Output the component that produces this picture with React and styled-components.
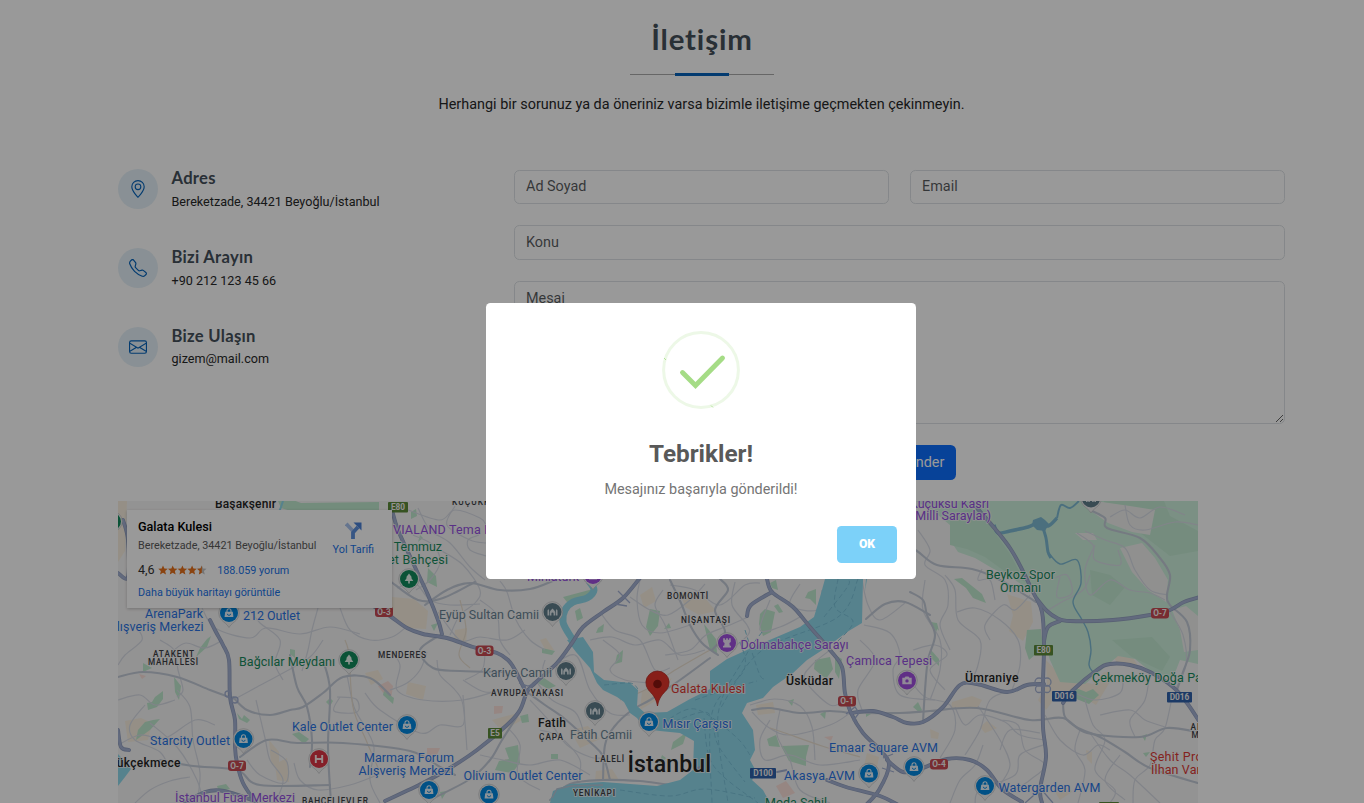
import React from "react";
import styled, { createGlobalStyle } from "styled-components";
import { BsGeoAlt, BsTelephone, BsEnvelope } from "react-icons/bs";

const GlobalStyle = createGlobalStyle`
  *, *::before, *::after { box-sizing: border-box; }
  html, body { margin: 0; height: 100%; overflow: hidden; background: #fff; }
  body {
    font-family: Roboto, "Liberation Sans", sans-serif;
    font-size: 14.4px;
    line-height: 1.5;
    color: #272829;
  }
  h2, h3, h4, p { margin: 0; }
`;

const Page = styled.main`
  height: 803px;
  overflow: hidden;
  padding: 18px 79px 0 118px;
`;

const SectionTitle = styled.header`
  display: flex;
  flex-direction: column;
  align-items: center;
  height: 152px;
`;

const Title = styled.h2`
  font-family: Lato, "Open Sans", sans-serif;
  font-size: 29.4px;
  line-height: 42px;
  font-weight: 700;
  color: #45505b;
  letter-spacing: 0.85px;
  margin-right: -0.85px;
`;

const Divider = styled.div`
  display: flex;
  align-items: center;
  justify-content: center;
  width: 144px;
  height: 3px;
  margin-top: 13px;
  background: linear-gradient(#aaa, #aaa) center / 100% 1px no-repeat;
  &::after {
    content: "";
    width: 54px;
    height: 3px;
    background: #0563bb;
  }
`;

const Lead = styled.p`
  margin-top: 18px;
  line-height: 22px;
  letter-spacing: 0.015px;
`;

const Columns = styled.div`
  display: grid;
  grid-template-columns: 396px 771px;
  height: 331px;
`;

const InfoList = styled.div`
  display: flex;
  flex-direction: column;
  gap: 38.7px;
  margin-top: -0.6px;
`;

const InfoItem = styled.div`
  display: flex;
  gap: 13.5px;
  height: 40px;
`;

const IconCircle = styled.div`
  display: grid;
  place-items: center;
  width: 40px;
  height: 40px;
  border-radius: 50%;
  background: #e5f1f8;
  color: #0563bb;
  font-size: 18px;
  svg { display: block; }
`;

const InfoTitle = styled.h4`
  font-family: Lato, "Open Sans", sans-serif;
  font-size: 16.6px;
  line-height: 19px;
  font-weight: 700;
  color: #45505b;
  letter-spacing: 0.3px;
`;

const InfoText = styled.p`
  margin-top: 3.5px;
  font-size: 12.6px;
  line-height: 20px;
  white-space: nowrap;
`;

const Form = styled.form`
  display: flex;
  flex-direction: column;
  gap: 21px;
`;

const FieldRow = styled.div`
  display: grid;
  grid-template-columns: 1fr 1fr;
  gap: 21px;
`;

const fieldLook = `
  width: 100%;
  padding: 5px 11px 6px;
  border: 1px solid #dee2e6;
  border-radius: 5.4px;
  background: #fff;
  color: #212529;
  font: 400 14.4px/21.6px Roboto, sans-serif;
  &::placeholder { color: rgba(33, 37, 41, 0.75); opacity: 1; }
`;

const Input = styled.input`
  ${fieldLook}
  height: ${(p) => p.$height || 34}px;
`;

const Message = styled.textarea`
  ${fieldLook}
  display: block;
  height: 143px;
  padding-top: 6px;
  resize: vertical;
`;

const SendButton = styled.button`
  align-self: center;
  width: 113px;
  height: 35px;
  padding: 0 3px 0 0;
  border: 0;
  border-radius: 5.4px;
  background: #0d6efd;
  color: #fff;
  font: 400 14.4px/35px Roboto, sans-serif;
  white-space: nowrap;
`;

const MapFrame = styled.section`
  position: relative;
  width: 1080px;
  height: 302px;
  overflow: hidden;
  background: #f6f5f5;
`;

const MapCanvas = styled.svg`
  display: block;
  font-family: Roboto, sans-serif;
`;

const PlaceCard = styled.aside`
  position: absolute;
  left: 9px;
  top: 9px;
  width: 265px;
  height: 98px;
  padding: 8px 17px 0 11px;
  display: flex;
  justify-content: space-between;
  background: #fff;
  box-shadow: 0 1px 3px rgba(0, 0, 0, 0.22);
  white-space: nowrap;
`;

const PlaceName = styled.h3`
  font-size: 12.6px;
  line-height: 18px;
  font-weight: 500;
  color: #000;
`;

const PlaceAddress = styled.p`
  margin-top: 1px;
  font-size: 10.8px;
  line-height: 18px;
  color: #5b5b5b;
`;

const Rating = styled.div`
  display: flex;
  align-items: center;
  margin-top: 6px;
  height: 19px;
  font-size: 12.6px;
  color: #333;
  svg { margin: 0 10.5px 1px 3px; }
`;

const Link = styled.a`
  font-size: 10.8px;
  line-height: 18px;
  color: #1a73e8;
`;

const MoreLink = styled(Link)`
  display: block;
  margin-top: 4px;
`;

const Directions = styled.div`
  display: flex;
  flex-direction: column;
  align-items: center;
  padding-top: 4px;
  margin-right: 1px;
  gap: 2px;
`;

const Overlay = styled.div`
  position: fixed;
  inset: 0;
  display: flex;
  align-items: flex-start;
  justify-content: center;
  padding: 303px 0 0 38px;
  background: rgba(0, 0, 0, 0.4);
`;

const Modal = styled.div`
  display: flex;
  flex-direction: column;
  align-items: center;
  width: 430px;
  height: 276px;
  border-radius: 4.5px;
  background: #fff;
`;

const SuccessMark = styled.svg`
  display: block;
  margin-top: 28px;
`;

const ModalTitle = styled.h2`
  margin-top: 27px;
  font-size: 24.3px;
  line-height: 36px;
  font-weight: 700;
  color: #595959;
`;

const ModalText = styled.p`
  margin-top: 7px;
  font-size: 14.4px;
  line-height: 22px;
  color: #757575;
`;

const OkButton = styled.button`
  align-self: flex-end;
  margin: 25px 19px 0 0;
  width: 60px;
  height: 37px;
  padding: 0 0 1px;
  border: 0;
  border-radius: 4.5px;
  background: #7cd1f9;
  color: #fff;
  font: 900 12.2px/35px Roboto, sans-serif;
`;

const curve = (pts) => {
  let d = `M${pts[0][0]} ${pts[0][1]}`;
  for (let i = 0; i < pts.length - 1; i++) {
    const a = pts[i - 1] || pts[i];
    const b = pts[i];
    const c = pts[i + 1];
    const e = pts[i + 2] || c;
    d += `C${b[0] + (c[0] - a[0]) / 6} ${b[1] + (c[1] - a[1]) / 6} ${c[0] - (e[0] - b[0]) / 6} ${c[1] - (e[1] - b[1]) / 6} ${c[0]} ${c[1]}`;
  }
  return d;
};

const highways = [
  [[210, 620], [216, 632], [223, 645], [229, 660], [230, 697], [235, 720], [235, 747], [237, 763], [243, 783], [256, 803]],
  [[360, 598], [375, 607], [390, 616], [407, 628], [423, 634], [447, 638], [473, 647], [497, 653], [508, 660], [515, 670], [524, 688]],
  [[648, 570], [640, 578], [623, 598], [603, 612], [583, 627], [572, 643], [557, 663], [535, 683], [527, 692], [520, 710], [507, 725], [477, 750], [450, 768], [423, 783], [385, 801]],
  [[767, 579], [772, 592], [793, 607], [810, 627], [830, 650], [842, 667], [845, 693], [851, 713], [863, 733], [880, 750], [889, 765], [879, 790], [865, 806]],
  [[851, 713], [873, 711], [893, 717], [907, 723], [923, 722], [943, 707], [960, 685], [977, 684], [1007, 692], [1027, 685], [1044, 684]],
  [[772, 592], [751, 605], [747, 616]],
  [[887, 760], [903, 772], [920, 769], [947, 759], [970, 760], [987, 770], [1002, 789], [1022, 802]],
  [[827, 780], [846, 787], [880, 796], [900, 806]],
  [[977, 508], [1010, 548], [1033, 592], [1042, 612], [1044, 645], [1043, 683], [1043, 727], [1046, 757], [1040, 790], [1043, 806]],
  [[1037, 599], [1047, 611], [1057, 618], [1070, 621], [1113, 620], [1150, 615], [1170, 610], [1184, 602], [1200, 597]],
  [[1044, 641], [1048, 627], [1060, 621]],
  [[1063, 703], [1072, 691], [1097, 670], [1110, 664], [1130, 665], [1150, 672], [1173, 687], [1187, 703], [1199, 721]],
  [[392, 510], [398, 530], [414, 565], [428, 595], [438, 620], [442, 634]],
  [[118, 573], [128, 577], [128, 540], [123, 520]],
  [[185, 803], [205, 792], [224, 791], [255, 801]],
  [[118, 730], [121, 747], [129, 750]],
];

const arterials = [
  [[1090, 510], [1105, 518], [1107, 528], [1140, 538], [1160, 558], [1170, 575], [1167, 595], [1170, 605], [1187, 622], [1190, 650], [1183, 672], [1177, 690]],
  [[777, 772], [743, 771], [710, 777], [680, 785], [640, 781], [603, 780], [570, 784], [550, 800]],
  [[850, 713], [900, 713], [930, 711], [977, 708], [1030, 720], [1063, 718], [1087, 733], [1140, 737], [1167, 728], [1198, 732]],
  [[1063, 700], [1065, 717], [1078, 728], [1100, 737], [1125, 752], [1150, 768], [1198, 783]],
  [[910, 592], [923, 600], [927, 615], [935, 635], [928, 660], [925, 690], [923, 722]],
  [[898, 540], [917, 551], [937, 565], [972, 569], [1000, 580], [1036, 602]],
  [[233, 697], [247, 710], [270, 715], [290, 710], [303, 707], [323, 693], [343, 677], [370, 678], [390, 695]],
  [[118, 677], [143, 672], [177, 677], [210, 690], [229, 697]],
  [[240, 757], [267, 740], [297, 743], [343, 743], [410, 751], [440, 767], [455, 775]],
  [[442, 634], [420, 650], [433, 668], [460, 671], [505, 672]],
  [[425, 605], [447, 590], [470, 583], [500, 590], [530, 589], [555, 580]],
  [[390, 581], [418, 600], [443, 598], [475, 582]],
  [[524, 690], [545, 705], [565, 719], [590, 742], [603, 756], [610, 780]],
  [[603, 780], [605, 745], [614, 727], [632, 710], [650, 700], [680, 680], [710, 658]],
  [[866, 619], [885, 604], [905, 602], [930, 615]],
  [[752, 710], [770, 708], [800, 713], [830, 711], [850, 713]],
  [[670, 580], [681, 603], [690, 625], [702, 643], [718, 655]],
  [[720, 579], [728, 590], [715, 610], [725, 632], [712, 650]],
  [[290, 655], [297, 687], [307, 707], [312, 740], [310, 767]],
  [[323, 660], [330, 690], [328, 747], [331, 803]],
  [[160, 760], [193, 766], [237, 770], [260, 785], [330, 785]],
  [[430, 800], [470, 779], [490, 760], [502, 740], [520, 712]],
];

const streets = [
  [[323, 640], [310, 657], [283, 673], [257, 687], [233, 700]],
  [[150, 723], [177, 747], [197, 780], [203, 803]],
  [[177, 690], [190, 707], [193, 740], [200, 773], [197, 803]],
  [[118, 745], [140, 735], [165, 738], [195, 720], [215, 725]],
  [[135, 803], [150, 790], [170, 781], [190, 777]],
  [[145, 705], [130, 725], [135, 740], [160, 752], [170, 770]],
  [[118, 700], [140, 695], [155, 705], [175, 700]],
  [[160, 640], [174, 650], [178, 670], [183, 690], [177, 697]],
  [[137, 628], [142, 640], [125, 655], [118, 665]],
  [[202, 608], [215, 628], [250, 638], [266, 628], [300, 634], [330, 627], [360, 634]],
  [[250, 610], [260, 623], [280, 640], [275, 663], [283, 680]],
  [[223, 640], [205, 648], [186, 643], [174, 650]],
  [[318, 608], [312, 630], [308, 650], [302, 671]],
  [[340, 608], [350, 630], [370, 640], [392, 637], [405, 628]],
  [[347, 675], [354, 707], [365, 727], [374, 748], [370, 780], [380, 803]],
  [[337, 697], [356, 699], [357, 712], [334, 711], [340, 697]],
  [[256, 700], [265, 738], [270, 760], [283, 780], [275, 803]],
  [[247, 760], [260, 775], [285, 783], [287, 762], [271, 750]],
  [[294, 763], [300, 780], [318, 790], [350, 785], [380, 774]],
  [[365, 693], [380, 710], [420, 733], [440, 725], [463, 725], [463, 695]],
  [[390, 650], [400, 665], [397, 690], [423, 700], [463, 700], [500, 690]],
  [[390, 690], [407, 683], [420, 670], [427, 652]],
  [[437, 660], [440, 675], [455, 690], [463, 705], [467, 750]],
  [[463, 680], [485, 692], [510, 690], [523, 690]],
  [[485, 653], [482, 670], [465, 680]],
  [[450, 635], [460, 615], [475, 603], [480, 590], [463, 565], [440, 550]],
  [[418, 508], [430, 530], [450, 543], [470, 567], [485, 580]],
  [[408, 510], [440, 520], [455, 510], [480, 518], [486, 525]],
  [[413, 535], [433, 545], [440, 562], [430, 580], [416, 590]],
  [[455, 506], [447, 525], [470, 540], [486, 543]],
  [[486, 556], [470, 550], [468, 540], [479, 535]],
  [[397, 588], [415, 583], [430, 600], [450, 605], [480, 604]],
  [[500, 581], [507, 592], [516, 620], [530, 640], [545, 650]],
  [[480, 600], [497, 615], [500, 640], [510, 655]],
  [[438, 612], [460, 640], [480, 637], [507, 640], [525, 630]],
  [[536, 681], [552, 700], [575, 712], [583, 730]],
  [[545, 660], [545, 670], [575, 655], [590, 690], [610, 713], [630, 715]],
  [[530, 700], [550, 722], [567, 745], [590, 757], [603, 758]],
  [[508, 728], [520, 745], [518, 775], [540, 790]],
  [[480, 755], [503, 760], [530, 765], [560, 760], [590, 775]],
  [[540, 730], [560, 737], [580, 760], [577, 782]],
  [[603, 640], [620, 655], [610, 670], [625, 680], [650, 683]],
  [[590, 640], [612, 637], [635, 645], [660, 640], [680, 655], [705, 650]],
  [[600, 612], [615, 630], [640, 640], [655, 670], [670, 668]],
  [[630, 597], [650, 610], [668, 615], [690, 600], [705, 584]],
  [[640, 580], [637, 600], [642, 625], [660, 633], [690, 625]],
  [[663, 590], [655, 605], [665, 625], [678, 660]],
  [[670, 585], [695, 590], [720, 605], [745, 585], [760, 583]],
  [[735, 582], [732, 605], [747, 625], [748, 635], [730, 650]],
  [[665, 655], [690, 650], [706, 635], [730, 625], [748, 617]],
  [[770, 600], [760, 630], [780, 627], [800, 617]],
  [[800, 584], [790, 605], [817, 610], [822, 590]],
  [[750, 705], [775, 699], [800, 706], [812, 727], [815, 760]],
  [[752, 712], [768, 727], [790, 735], [830, 725], [850, 713]],
  [[770, 720], [760, 740], [765, 760], [790, 755], [820, 765], [860, 760]],
  [[780, 710], [777, 735], [790, 760], [800, 790], [830, 803]],
  [[830, 650], [812, 665], [805, 680], [830, 705], [845, 700]],
  [[860, 640], [875, 660], [858, 690], [862, 710]],
  [[864, 625], [890, 633], [900, 655], [893, 670], [900, 695], [935, 700]],
  [[862, 580], [868, 605], [880, 620], [905, 603]],
  [[925, 580], [923, 610], [940, 640], [940, 670], [930, 700]],
  [[918, 530], [930, 550], [925, 565], [945, 580], [948, 605], [940, 625], [950, 650]],
  [[945, 575], [955, 590], [958, 620], [980, 640], [978, 665], [970, 684]],
  [[957, 612], [975, 608], [1000, 620], [1018, 640], [1020, 665], [1012, 690]],
  [[1030, 595], [1015, 610], [1003, 605], [985, 625], [990, 640]],
  [[995, 600], [990, 580], [978, 580], [982, 569]],
  [[1012, 690], [990, 700], [980, 730], [965, 755]],
  [[913, 650], [935, 645], [947, 655], [930, 670], [945, 690]],
  [[910, 680], [925, 697], [950, 705], [955, 730], [940, 758]],
  [[955, 707], [965, 725], [980, 715], [1005, 722], [1020, 735], [1045, 740]],
  [[978, 706], [1000, 740], [1010, 765], [1000, 785]],
  [[1000, 720], [1018, 725], [1025, 750], [1045, 765], [1030, 780], [1015, 790]],
  [[1043, 745], [1020, 755], [1015, 775], [980, 790], [975, 803]],
  [[1000, 750], [1010, 730], [1040, 733]],
  [[950, 803], [960, 780], [975, 765], [983, 745]],
  [[1073, 692], [1095, 700], [1120, 693], [1123, 677]],
  [[1080, 730], [1075, 750], [1085, 770], [1078, 803]],
  [[1045, 715], [1060, 740], [1083, 755], [1098, 745], [1110, 750]],
  [[1085, 700], [1093, 725], [1105, 740], [1095, 770], [1115, 790], [1110, 803]],
  [[1100, 715], [1130, 710], [1145, 720], [1165, 727]],
  [[1150, 670], [1145, 700], [1130, 720], [1135, 737]],
  [[1173, 692], [1165, 728], [1155, 740], [1150, 765], [1135, 780], [1133, 803]],
  [[1120, 755], [1105, 780], [1125, 800]],
  [[1090, 733], [1110, 760], [1130, 775], [1160, 803]],
  [[1085, 531], [1105, 540], [1125, 548], [1135, 570], [1150, 590], [1168, 595]],
  [[1077, 533], [1093, 545], [1095, 560], [1120, 565], [1118, 550]],
  [[1125, 505], [1130, 525], [1145, 530], [1175, 522], [1198, 525]],
  [[1110, 517], [1125, 510], [1140, 518], [1160, 507], [1185, 515]],
  [[1095, 545], [1085, 570], [1090, 595], [1110, 580], [1130, 590], [1150, 593], [1165, 600]],
  [[1060, 577], [1057, 597], [1072, 593], [1067, 575], [1055, 578]],
  [[1045, 612], [1060, 603], [1083, 590], [1090, 575]],
  [[1170, 612], [1183, 635], [1186, 665], [1175, 690]],
];

const ferries = [
  [[740, 642], [744, 670], [712, 713], [712, 803]],
  [[762, 632], [745, 657], [718, 715], [728, 803]],
  [[838, 579], [835, 607], [853, 622], [834, 645]],
  [[858, 579], [838, 617], [760, 652], [720, 709]],
  [[824, 617], [848, 586], [847, 579]],
  [[663, 723], [695, 709], [735, 736], [750, 755]],
  [[675, 721], [708, 713], [718, 745], [745, 782]],
  [[704, 718], [713, 765], [758, 803]],
  [[620, 790], [670, 796], [705, 789], [755, 798]],
  [[604, 685], [630, 683], [638, 689]],
  [[695, 700], [725, 690], [757, 681]],
  [[745, 630], [759, 673], [765, 679]],
];

const parks = [
  "M155 697l8-6 0 8-6 8-9 3-1-7 5-1z", "M145 722l8-2 7-1-10 11-14 10 2-10z", "M237 713l5 6 2-4 6 5-3 3-8-4z",
  "M200 648l7-9 4-3-4 11-11 10z", "M174 677l7 9-2 14-4-8z", "M292 734l7-2 10 7-5 5z", "M290 649l5 1 0 8-5-4z",
  "M143 663l9 5-9 4z", "M384 691l10 7-1 6-10-9z", "M330 698l3 3-3 5-4-4z", "M217 786l9-2 4 5-11 3z",
  "M428 568l8 8 1 11-10-5z", "M431 625l7-2-4 8z", "M411 512l5-3 1 7-6 3z", "M420 535l3 3-5 4z", "M542 648l13 3-3 4-10-2z",
  "M544 678l12 8-8 3-10-6z", "M520 716l8-2 1 8-7 1z", "M505 748l13-3 2 18-8 10-17-3 4-9 10-2z", "M440 792l7-1-5 8z",
  "M551 754h7v5h-7z", "M575 611l5-3 3 10-6 3z", "M598 628l6-4-1 8-7 1z", "M650 609l10 2-2 15-8 10-4-9z",
  "M563 597l30-8-2 8-20 10z", "M617 655l6-5-1 12-7 2z", "M673 742l14-10-4 12-12 6z", "M760 614l5-5 10 3-4 20-8 4-4-12z",
  "M704 624l12 15 1 15-7-4z", "M774 606l4-2 5 8-4 1z", "M808 592l8-3 0 16-6-6-5-1z", "M815 660l15-3 3 12-7 10-12-10z",
  "M781 746l28-1-3 12 0 9-17-5z", "M767 739l9-4 4 12-11-1z", "M788 701l6-2-2 7z", "M820 714l6-3-1 8z",
  "M922 710l-4-8-5 5 7 6z", "M954 579l8-1 20 16 4 9-13-5-7-10z", "M930 622l7 1 2 8-5-6z", "M1027 630l14-1 2 19-14 12-4-12z",
  "M1086 692l-10-4-2 10 15 6 10-9-6-6z", "M1142 736l5-2-2 7z", "M1143 753l7-1-4 5z", "M932 622l6 5-3 8z",
  "M931 650l8 9 0 7-8-8z", "M670 784l10-3-4 6z", "M662 755l-5 15 9-12z", "M866 711l5 3-5 3z", "M835 655l7 4-3 20-4-7z",
  "M669 623l-5 6 7-1z", "M770 583l6-3 2 10-6-2z", "M278 501l15-1 8 3 78-1 0 8-85 2-13-4z",
];

const sandAreas = [
  "M125 721l16-3 11 5-4 17-20 2z", "M118 501h9l-2 50-7 11z", "M269 740l10 12 0 20-8-9z", "M275 764l12-6 2 24-12-2z",
  "M392 597l22 2 14 12-2 18-18-1-16-13z", "M455 630l12-2-1 17-12-4z", "M365 673l13-3 5 9-12 6z", "M408 682l18 4-3 14-17-6z",
  "M492 720l22-6 8 6-20 11z", "M570 730l18-4 12 13-20 9z", "M596 771l16-2 7 11-24 1z", "M640 710l20-12 12-20-30 14z",
  "M680 592l24 5 12 14-17 4-14-8z", "M640 595l12-8 4 14-12 7z", "M756 705l17-3 2 11-17 2z", "M952 702l20-6 10 4-5 9-26-1z",
  "M1007 594l24 8 2 20-10 19-14-10 4-16z", "M1046 660l17 18 30 6 11-12 10 3-18 30-11-7-25-7-14 19-8-10 9-16z",
  "M980 727l7-6 10 7-12 5z", "M1086 750l6 2 0 12-5-5z", "M1113 655l20 3 6 9-22-4z", "M867 753l12 4-3 15-13-2z",
  "M930 729l9 4-1 6-7-1z", "M1060 800l12-8-3-5-14 5z", "M700 780l30-6 10 8-30 6z", "M540 640l6-2 8 12-8 1z",
];

const rosyAreas = [
  "M378 686l10-5 5 5-2 13-7-5z", "M139 674l7 2-4 3z", "M776 786l10-5 9 12-12 5z", "M494 706l9 0-1 7-8 1z",
  "M505 759l9 3-4 4-6-2z", "M824 737l9-1-2 5z", "M427 748l13 0-4 9-9-2z", "M1048 612l5 3-1 10-6-4z",
];

const label = {
  blue: "#2b74e4", green: "#178a5c", purple: "#9450e0", grey: "#688293", red: "#dc3a35", dark: "#242424", small: "#3d4045",
};

/* [text, x, baseline, width, colour, size, weight, anchor] */
const labels = [
  ["Başakşehir", 215, 508, 61, "dark", 12, 500],
  ["VIALAND Tema Park", 393, 534, 117, "purple", 12.5],
  ["15 Temmuz", 442, 551, 65, "green", 12.5, 400, "end"],
  ["Millet Bahçesi", 448, 563.5, 81, "green", 12.5, 400, "end"],
  ["ArenaPark", 145, 618, 58, "blue", 12.5],
  ["Alışveriş Merkezi", 203.5, 630.5, 95, "blue", 12.5, 400, "end"],
  ["212 Outlet", 243, 619.5, 57, "blue", 12.5],
  ["ATAKENT", 153, 656.5, 41, "small", 8.2, 500],
  ["MAHALLESİ", 148, 664.5, 50, "small", 8.2, 500],
  ["Bağcılar Meydanı", 239, 666, 96, "green", 12.5],
  ["MENDERES", 378, 657.5, 48, "small", 8.3, 500],
  ["Eyüp Sultan Camii", 439, 619, 100, "grey", 12.5],
  ["Miniatürk", 527, 581, 52, "purple", 12.5],
  ["KÜÇÜKKÖY", 452, 504.5, 50, "small", 8.3, 500],
  ["BOMONTİ", 667, 599, 41, "small", 8.3, 500],
  ["NİŞANTAŞI", 681, 623, 49, "small", 8.3, 500],
  ["Dolmabahçe Sarayı", 740.5, 649, 108, "purple", 12.5],
  ["Kariye Camii", 483, 677, 69, "grey", 12.5],
  ["AVRUPA YAKASI", 491, 696, 72, "small", 8.3, 500],
  ["Galata Kulesi", 671, 693, 74, "red", 12.5],
  ["Fatih", 538, 727, 28, "dark", 12, 500],
  ["ÇAPA", 539, 740, 24, "small", 8.3, 500],
  ["Fatih Camii", 570, 739, 62, "grey", 12.5],
  ["Mısır Çarşısı", 662.5, 728, 69, "blue", 12.5],
  ["LALELİ", 595, 761.5, 29, "small", 8.3, 500],
  ["İstanbul", 627.5, 771.5, 83.5, "dark", 23, 500],
  ["YENİKAPI", 573, 796, 42, "small", 8.3, 500],
  ["Olivium Outlet Center", 463.5, 779.5, 119, "blue", 12.5],
  ["Marmara Forum", 364, 762, 90, "blue", 12.5],
  ["Alışveriş Merkezi", 358.5, 775, 95, "blue", 12.5],
  ["Kale Outlet Center", 292, 731, 101, "blue", 12.5],
  ["Starcity Outlet", 150, 745, 80, "blue", 12.5],
  ["Küçükçekmece", 180.5, 767, 85, "dark", 12, 500, "end"],
  ["İstanbul Fuar Merkezi", 175, 802, 120, "purple", 12.5],
  ["BAHÇELİEVLER", 302, 803.5, 66, "small", 8.3, 500],
  ["Üsküdar", 786, 685, 47, "dark", 12.3, 500],
  ["Çamlıca Tepesi", 846, 665, 86, "purple", 12.5],
  ["Emaar Square AVM", 829, 751.5, 109, "blue", 12.5],
  ["Akasya AVM", 784, 779.5, 71, "blue", 12.5],
  ["Moda Sahil", 765, 807, 62, "green", 12.5],
  ["Küçüksu Kasrı", 989, 507.5, 79, "purple", 12.5, 400, "end"],
  ["(Milli Saraylar)", 991, 519.5, 80, "purple", 12.5, 400, "end"],
  ["Beykoz Spor", 986, 579, 69, "green", 12.5],
  ["Ormanı", 1000, 591.5, 41, "green", 12.5],
  ["Ümraniye", 965, 681.5, 53.5, "dark", 12.2, 500],
  ["Çekmeköy Doğa Parkı", 1092, 682, 124, "green", 12.5],
  ["ALEMDAĞ", 1190.5, 730, 44, "small", 8.3, 500],
  ["MAHALLESİ", 1191.5, 738, 50, "small", 8.3, 500],
  ["Şehit Prof. Dr.", 1150, 760.5, 80, "red", 12.5],
  ["İlhan Varank", 1151, 773.5, 70, "red", 12.5],
  ["Watergarden AVM", 998.5, 792, 102, "blue", 12.5],
];

const shieldColours = { r: "#c84a52", g: "#5d8a3a", b: "#2f62ab" };
/* [text, x, y, width, kind] */
const shields = [
  ["E80", 388, 502, 20, "g"], ["O-3", 375, 606.5, 18, "r"], ["O-3", 475.5, 645.5, 18, "r"],
  ["E5", 488, 728, 14, "g"], ["O-7", 228, 760.5, 18, "r"], ["O-1", 838, 696, 18, "r"],
  ["O-4", 930, 759, 18, "r"], ["D100", 750, 768, 26, "b"], ["O-7", 1151, 608, 18, "r"],
  ["E80", 1034, 645, 19, "g"], ["D016", 1052, 691, 24.5, "b"], ["D016", 1167, 692, 25, "b"],
  ["E80", 1099, 802, 20, "g"],
];

const pins = [
  ["bag", 229, 613], ["tree", 409, 579], ["tree", 349, 660], ["mosque", 552.5, 612], ["castle", 593, 575],
  ["castle", 727, 643], ["mosque", 566, 671], ["mosque", 595, 711], ["bag", 649, 722], ["bag", 489, 794.5],
  ["bag", 429, 790], ["bag", 407, 725], ["bag", 243.5, 739], ["hospital", 319, 759], ["camera", 907, 680.5],
  ["bag", 914, 767], ["bag", 869, 773.5], ["mosque", 1091, 498.5], ["bag", 985, 786], ["tree", 112, 521.5],
];

const pinFill = { bag: "#0288e0", tree: "#128a5c", mosque: "#607d8b", castle: "#a04fe0", camera: "#a04fe0", hospital: "#dc3545" };

function PinGlyph({ kind }) {
  if (kind === "bag")
    return (
      <g>
        <path d="M-3.800-1.200h7.600l.6 5.200h-8.800z" fill="#e8f3fc" />
        <path d="M-2-1v-1.300a2 2 0 0 1 4 0V-1" fill="none" stroke="#e8f3fc" strokeWidth="1.100" />
        <path d="M-1.600.8a1.600 1.600 0 0 0 3.200 0" fill="none" stroke="#0288e0" strokeWidth=".9" />
      </g>
    );
  if (kind === "tree") return <path d="M0-5.500L3-1.600H2L4.300 2H.8v2.600H-.8V2h-3.500L-2-1.600H-3z" fill="#e6f7ee" />;
  if (kind === "mosque")
    return <path d="M-5 3.600V-1.500l.8-1.500.8 1.500V3.600zM3.400 3.600V-1.500l.8-1.500.8 1.500V3.600zM-2.700 3.600V0Q-2.500-1.600 0-3.600 2.500-1.600 2.700 0V3.600H1.100V1.500a1.100 1.100 0 0 0-2.200 0V3.600z" fill="#dfe8ec" />;
  if (kind === "castle")
    return <path d="M-3.800-4.800h1.700v1.500h1.200v-1.500H.9v1.500h1.200v-1.500h1.700V-1L2.400 0 2.800 2.800H4V4.600H-4V2.800h1.200L-2.400 0l-1.400-1z" fill="#f1e4fb" />;
  if (kind === "camera")
    return (
      <g>
        <path d="M-4.700-2.700h2.200l1-1.400h3l1 1.400h2.200v6.400h-9.400z" fill="#f1e4fb" />
        <circle cx="0" cy=".4" r="1.700" fill="#a04fe0" />
      </g>
    );
  return <path d="M-3.200-4v8M3.200-4v8M-3.200 0h6.400" stroke="#fdeaea" strokeWidth="1.900" fill="none" />;
}

function Pin({ kind, x, y }) {
  return (
    <g transform={`translate(${x} ${y})`}>
      <path d="M0 14.500C-2 11-5 9.500-7.500 7A10.300 10.300 0 1 1 7.500 7C5 9.500 2 11 0 14.500z" fill="#efefef" stroke="#b9bcc0" strokeWidth=".6" />
      <circle r="9" fill={pinFill[kind]} />
      <PinGlyph kind={kind} />
    </g>
  );
}

function CityMap() {
  return (
    <MapCanvas width="1080" height="302" viewBox="118 501 1080 302">
      <g fill="#f8efdf">{sandAreas.map((d) => <path key={d} d={d} />)}</g>
      <g fill="#fadfd9">{rosyAreas.map((d) => <path key={d} d={d} />)}</g>

      <path fill="#cdf0dc" d="M916 501H1198V664L1180 660 1173 678 1150 671 1135 659 1118 656 1104 668 1085 684 1060 682 1050 660 1044 640 1042 612 1030 590 1012 578 992 568 975 558 958 552 950 540 950 525 938 515z" />
      <path fill="#c3ead2" d="M950 515l22-7 18 18 20 28 15 28-18-9-22-16-18-8-17-4z" />
      <path fill="#c3ead2" d="M1104 501h60l6 15 28 15v20l-28 5-18-14-18-14-25-9z M1090 570l20 5 15 12-15 18-18-10z M1112 640l40-3 18 20-8 14-30-14z" />
      <path fill="#f0f1ef" d="M1095 501l35 5 25 4-5 25-18-3-24-9-17-12z M1120 548l22-5 13 15 13 22-2 22-18-12-16-18z M1172 610l14-4 12 10V650l-14 2-4-22z M1075 533l18 0 4 7-14 0z" />
      <g fill="#c0e9cf">{parks.map((d) => <path key={d} d={d} />)}</g>

      <g fill="none" stroke="#d8dce5" strokeWidth="1.200">{streets.map((p, i) => <path key={i} d={curve(p)} />)}</g>
      <g fill="none" stroke="#e9dfd0" strokeWidth="1.200">
        <path d={curve([[345, 640], [349, 655], [353, 707], [366, 740], [379, 770]])} />
        <path d={curve([[460, 600], [466, 630], [459, 655], [470, 668]])} />
        <path d={curve([[770, 728], [785, 733], [822, 746], [860, 757]])} />
        <path d={curve([[620, 700], [645, 690], [672, 672], [710, 650]])} />
      </g>
      <g fill="none" stroke="#c4cbd8" strokeWidth="2.100" strokeLinecap="round">{arterials.map((p, i) => <path key={i} d={curve(p)} />)}</g>

      <g fill="#8fd9ec">
        <path d="M825 579H863L862 623 847 632 827 647 807 660 793 673 773 687 763 698 747 703 742 713 753 730 755 750 750 760 757 773 752 780 763 790 770 803H550L553 791 570 784 603 782 630 784 657 786 680 780 693 770 694 741 680 733 660 731 645 729 637 718 630 713 624 702 617 697 603 690 597 683 590 668 576 652 567 640 583 637 593 652 594 672 604 680 630 683 638 690 637 706 645 713 667 712 690 699 710 689 710 671 727 659 760 644 800 627 814 617 820 597z" />
        <path d="M118 754l13 15-6 8-7 9z" />
        <path d="M866 579l1 0-2 12z" />
      </g>
      <path d={curve([[589, 581], [594, 590], [587, 598], [573, 602], [565, 610], [563, 622], [569, 634], [578, 647]])} fill="none" stroke="#8fd9ec" strokeWidth="7" />
      <path d={curve([[283, 501], [281, 507], [279, 512]])} fill="none" stroke="#8fd9ec" strokeWidth="2" />
      <path d="M552 798l5-9 14-3 32-1" fill="none" stroke="#b8c8d8" strokeWidth="1.500" />
      <g fill="none" stroke="#78bfd7" strokeWidth=".9" strokeDasharray="5 3">{ferries.map((p, i) => <path key={i} d={curve(p)} />)}</g>

      <g fill="none" stroke="#7db9d3">
        <path strokeWidth="3.500" d={curve([[994, 525], [998, 533], [1010, 531], [1028, 527], [1038, 523], [1048, 526], [1057, 518]])} />
        <path strokeWidth="2" d={curve([[1057, 518], [1061, 505], [1070, 508], [1079, 501]])} />
        <path strokeWidth="3" d={curve([[1042, 525], [1046, 538], [1048, 552], [1051, 558]])} />
        <path strokeWidth="1.400" d={curve([[1048, 552], [1060, 564], [1077, 560], [1081, 583], [1073, 602], [1081, 618], [1088, 632], [1091, 650], [1089, 665], [1093, 672]])} />
      </g>
      <path d="M1033 520l8-3 4 3 4 4-4 7-8-1-5-5z" fill="#7db9d3" />

      <g fill="none" stroke="#919fbf" strokeWidth="3.900" strokeLinecap="round">{highways.map((p, i) => <path key={i} d={curve(p)} />)}</g>
      <g fill="none" stroke="#a4b1d2" strokeWidth="2.500" strokeLinecap="round">{highways.map((p, i) => <path key={i} d={curve(p)} />)}</g>
      <path d="M694 770l10-5M777 772l10-2" stroke="#a4b1d2" strokeWidth="2" />
      <g fill="none" stroke="#a4b1d2" strokeWidth="1.300">
        <circle cx="1039" cy="682" r="4" /><circle cx="1047" cy="682" r="4" />
        <circle cx="1039" cy="689" r="3.500" /><circle cx="1047" cy="689" r="3.500" />
        <circle cx="228" cy="694" r="3" /><circle cx="235" cy="700" r="3" />
        <path d="M519 683l9 3 8-3M517 676l8 10 3 9M846 714l9-7 4 6-6 8M883 758l10-4M882 768l12 4M1025 803l16-14 12 14M618 591l12 12M615 604l12 2" />
      </g>

      <g paintOrder="stroke" stroke="#f4f4f4" strokeWidth="2" strokeLinejoin="round" strokeOpacity=".75">
        {labels.map(([t, x, y, w, c, size, weight, anchor]) => (
          <text key={t + x} x={anchor === "end" ? x - w : x} y={y} textLength={w} fill={label[c]} fontSize={size} fontWeight={weight || 400}>
            {t}
          </text>
        ))}
      </g>
      {shields.map(([t, x, y, w, k]) => (
        <g key={t + x}>
          <rect x={x} y={y} width={w} height="10.500" rx={k === "r" ? 3 : 1} fill={shieldColours[k]} />
          <text x={x + w / 2} y={y + 8.300} textAnchor="middle" fontSize="8.300" fontWeight="700" fill="#f4f1f1">{t}</text>
        </g>
      ))}
      {pins.map(([k, x, y]) => <Pin key={k + x} kind={k} x={x} y={y} />)}
      <path d="M657.500 706C656 697 652 694 648.500 690A11.600 11.600 0 1 1 666.500 690C663 694 659 697 657.500 706z" fill="#e2352b" stroke="#b52b24" strokeWidth=".8" />
      <circle cx="657.500" cy="684" r="4.300" fill="#8a1410" />
    </MapCanvas>
  );
}

const starPath = "M5 .4l1.350 3.150 3.400.3-2.600 2.250.8 3.350L5 7.650 2.050 9.450l.8-3.350L.25 3.850l3.400-.3z";

function Stars() {
  return (
    <svg width="49" height="10" viewBox="0 0 49 10">
      {[0, 1, 2, 3].map((i) => <path key={i} d={starPath} transform={`translate(${i * 9.7} 0)`} fill="#e7711b" />)}
      <path d={starPath} transform="translate(38.800 0)" fill="#c4c4c4" />
      <path d="M5 .4v7.250L2.050 9.450l.8-3.350L.25 3.850l3.400-.3z" transform="translate(38.800 0)" fill="#e7711b" />
    </svg>
  );
}

const contacts = [
  { icon: BsGeoAlt, title: "Adres", text: "Bereketzade, 34421 Beyoğlu/İstanbul" },
  { icon: BsTelephone, title: "Bizi Arayın", text: "+90 212 123 45 66" },
  { icon: BsEnvelope, title: "Bize Ulaşın", text: "gizem@mail.com" },
];

export default function App() {
  return (
    <>
      <GlobalStyle />
      <Page>
        <SectionTitle>
          <Title>İletişim</Title>
          <Divider />
          <Lead>Herhangi bir sorunuz ya da öneriniz varsa bizimle iletişime geçmekten çekinmeyin.</Lead>
        </SectionTitle>
        <Columns>
          <InfoList>
            {contacts.map(({ icon: Icon, title, text }) => (
              <InfoItem key={title}>
                <IconCircle><Icon /></IconCircle>
                <div>
                  <InfoTitle>{title}</InfoTitle>
                  <InfoText>{text}</InfoText>
                </div>
              </InfoItem>
            ))}
          </InfoList>
          <Form>
            <FieldRow>
              <Input placeholder="Ad Soyad" />
              <Input placeholder="Email" />
            </FieldRow>
            <Input placeholder="Konu" $height={35} />
            <Message placeholder="Mesaj" />
            <SendButton type="button">Mesajı Gönder</SendButton>
          </Form>
        </Columns>
        <MapFrame>
          <CityMap />
          <PlaceCard>
            <div>
              <PlaceName>Galata Kulesi</PlaceName>
              <PlaceAddress>Bereketzade, 34421 Beyoğlu/İstanbul</PlaceAddress>
              <Rating>4,6<Stars /><Link>188.059 yorum</Link></Rating>
              <MoreLink>Daha büyük haritayı görüntüle</MoreLink>
            </div>
            <Directions>
              <svg width="17" height="17" viewBox="0 0 17 17" fill="none">
                <path d="M1.200 1.800L7.500 8.500" stroke="#a9c3ee" strokeWidth="3.600" />
                <path d="M8 17V10.500L13 5" stroke="#5d8fdc" strokeWidth="3.800" />
                <path d="M8.500.5H16.500V8.500z" fill="#4a80d6" />
              </svg>
              <Link>Yol Tarifi</Link>
            </Directions>
          </PlaceCard>
        </MapFrame>
      </Page>
      <Overlay>
        <Modal role="dialog">
          <SuccessMark width="78" height="78" viewBox="0 0 78 78" fill="none">
            <circle cx="39" cy="39" r="37.400" stroke="#edf8e7" strokeWidth="3" />
            <path d="M2 27l2 2M49 74.500l2 2" stroke="#a5dc86" strokeWidth=".8" />
            <path d="M20.500 41.500L33.500 54.500 60.500 27" stroke="#a5dc86" strokeWidth="4.900" strokeLinecap="round" />
          </SuccessMark>
          <ModalTitle>Tebrikler!</ModalTitle>
          <ModalText>Mesajınız başarıyla gönderildi!</ModalText>
          <OkButton type="button">OK</OkButton>
        </Modal>
      </Overlay>
    </>
  );
}
